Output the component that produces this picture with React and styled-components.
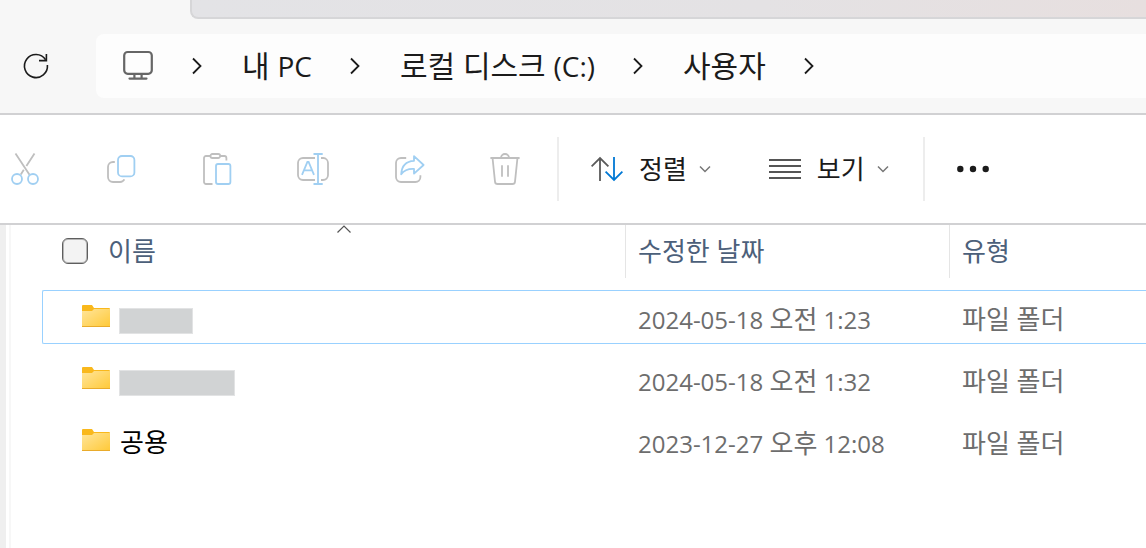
import React from "react";
import styled, { createGlobalStyle } from "styled-components";

const COLORS = {
  chrome: "#f7f7f7",
  line: "#d1d1d3",
  ink: "#1b1b1b",
  header: "#4c607a",
  muted: "#6d6d6d",
  iconGray: "#bfbfbf",
  iconBlue: "#a0cff2",
  focus: "#99d1ff",
};

const GlobalStyle = createGlobalStyle`
  * {
    box-sizing: border-box;
  }

  body {
    margin: 0;
    background: #fff;
    color: ${COLORS.ink};
    font-family: "Open Sans", "Noto Sans CJK KR", sans-serif;
    overflow-x: hidden;
  }

  svg {
    display: block;
    flex-shrink: 0;
    fill: none;
  }
`;

const Window = styled.div`
  display: flex;
  flex-direction: column;
  min-height: 100vh;
`;

const TitleStrip = styled.div`
  height: 19px;
  padding-left: 190px;
  background: ${COLORS.chrome};
`;

const TitleTrack = styled.div`
  height: 100%;
  border: solid #d6d6d8;
  border-width: 0 0 2px 2px;
  border-bottom-left-radius: 8px;
  background: linear-gradient(90deg, #e3e3e6 0%, #e4e2e4 60%, #e7dfdf 100%);
`;

const NavBar = styled.nav`
  display: flex;
  align-items: center;
  padding: 15px 0 15px 20px;
  background: ${COLORS.chrome};
  border-bottom: 2px solid ${COLORS.line};
`;

const IconButton = styled.button`
  display: flex;
  padding: 0;
  border: none;
  background: none;
`;

const AddressBar = styled.div`
  display: flex;
  flex: 1;
  align-items: center;
  gap: 38px;
  height: 64px;
  margin-left: 44px;
  padding-left: 26px;
  border-radius: 8px 0 0 8px;
  background: #fdfdfd;
`;

const Crumb = styled.a`
  padding-left: 2px;
  color: ${COLORS.ink};
  font-size: 30px;
  line-height: 40px;
  text-decoration: none;
  white-space: nowrap;
`;

const Latin = styled.span`
  font-size: 28px;
`;

const ToolBar = styled.div`
  display: flex;
  align-items: center;
  height: 110px;
  padding-left: 9px;
  border-bottom: 2px solid ${COLORS.line};
`;

const FileActions = styled.div`
  display: flex;
  gap: 64px;
  padding-right: 2px;
`;

const Divider = styled.div`
  width: 2px;
  height: 64px;
  margin: 0 32px 0 34px;
  background: #ededed;
`;

const MenuButton = styled.button`
  display: flex;
  align-items: center;
  gap: 12px;
  padding: 0;
  border: none;
  background: none;
  color: ${COLORS.ink};
  font-family: inherit;
  font-size: 26px;
  line-height: 36px;

  & + & {
    margin-left: 58px;
  }
`;

const MenuLabel = styled.span`
  padding-left: 4px;
`;

const Content = styled.main`
  display: flex;
  flex: 1;
`;

const SidebarEdge = styled.div`
  width: 11px;
  border: solid #f7f7f7;
  border-width: 0 2px 0 0;
  background: linear-gradient(90deg, #efefef 6px, #fff 6px);
`;

const FileTable = styled.table`
  display: block;
  flex: 1;
  padding-left: 31px;
`;

const TableHead = styled.thead`
  display: block;
  margin-bottom: 12px;
`;

const TableBody = styled.tbody`
  display: flex;
  flex-direction: column;
  gap: 8px;
`;

const Row = styled.tr`
  display: grid;
  grid-template-columns: 564px 324px 1fr;
  padding-left: 19px;
  border: 1px solid ${(props) => (props.$focused ? COLORS.focus : "transparent")};
  border-right: none;
  border-radius: 2px 0 0 2px;
`;

const HeadRow = styled(Row)`
  border-width: 0 0 0 1px;
`;

const HeadCell = styled.th`
  position: relative;
  display: flex;
  align-items: center;
  gap: 20px;
  height: 53px;
  padding: 0 0 2px ${(props) => (props.$first ? 0 : 12)}px;
  border-right: ${(props) => (props.$last ? "none" : "1px solid #e5e5e5")};
  color: ${COLORS.header};
  font-size: 26px;
  font-weight: 400;
  line-height: 36px;
`;

const SortMark = styled.svg`
  position: absolute;
  top: 0;
  left: 50%;
  margin-left: -8px;
`;

const CheckBox = styled.input`
  appearance: none;
  width: 26px;
  height: 26px;
  margin: 0;
  border: 1px solid #5e5e5e;
  border-radius: 6px;
  background: #f3f3f3;
  box-shadow: inset 0 0 0 1px #b5b5b5;
`;

const Cell = styled.td`
  display: flex;
  align-items: center;
  height: 52px;
  padding: 4px 0 0 12px;
  color: ${COLORS.muted};
  font-size: 26px;
  line-height: 36px;
  white-space: pre;
`;

const NameCell = styled(Cell)`
  gap: 9px;
  padding: 0 0 2px 20px;
  color: #000;
`;

const FileName = styled.span`
  padding: 4px 0 0 1px;
`;

const DateText = styled.span`
  font-size: 24px;
`;

const Meridiem = styled.span`
  font-size: 26px;
`;

const Redacted = styled.span`
  width: ${(props) => props.$width}px;
  height: 26px;
  margin-top: 10px;
  border: 1px solid #e2e3e4;
  background: #d1d3d4;
`;

const RefreshIcon = () => (
  <svg width="32" height="32" stroke={COLORS.ink} strokeWidth="1.6">
    <path d="M27.4 15a11.5 11.5 0 1 1-1.8-5.2" />
    <path d="M26.4 4v6.6H19" />
  </svg>
);

const MonitorIcon = () => (
  <svg width="32" height="32" stroke="#666" strokeWidth="2.2" strokeLinecap="round">
    <rect x="2.2" y="2" width="27.6" height="21.8" rx="3.5" />
    <path d="M12.4 24v4.5M19.6 24v4.5M7.5 28.6h17" />
  </svg>
);

const CrumbArrow = () => (
  <svg width="10" height="18" stroke={COLORS.ink} strokeWidth="1.8">
    <path d="M1 1.5 8.5 9 1 16.5" />
  </svg>
);

const CutIcon = () => (
  <svg width="32" height="32" stroke={COLORS.iconGray} strokeWidth="1.8">
    <path d="m6.5.5 14 21.2M25.5.5 17.4 13M14.8 16.8l-3 4.7" />
    <g stroke={COLORS.iconBlue}>
      <circle cx="8" cy="26" r="5" />
      <circle cx="24" cy="26" r="5" />
    </g>
  </svg>
);

const CopyIcon = () => (
  <svg width="32" height="32" stroke={COLORS.iconGray} strokeWidth="1.8">
    <path d="M9.8 9H8a5 5 0 0 0-5 5v10a5 5 0 0 0 5 5h6.8a5 5 0 0 0 4.6-2.6" />
    <rect x="13" y="3" width="16.4" height="20.4" rx="4" stroke={COLORS.iconBlue} />
  </svg>
);

const PasteIcon = () => (
  <svg width="32" height="32" stroke={COLORS.iconGray} strokeWidth="1.8">
    <path d="M11.5 31H5a2 2 0 0 1-2-2V5a2 2 0 0 1 2-2h4M19 3h4.4a2 2 0 0 1 2 2v2.6" />
    <rect x="9.4" y="1" width="9.8" height="4" rx="2" />
    <rect x="15" y="11" width="14.4" height="20" rx="2" stroke={COLORS.iconBlue} />
  </svg>
);

const RenameIcon = () => (
  <svg width="32" height="32" stroke={COLORS.iconGray} strokeWidth="1.8">
    <path d="M18 5H6a5 5 0 0 0-5 5v12a5 5 0 0 0 5 5h12M24 5h2.2A5 5 0 0 1 31 10v12a5 5 0 0 1-5 5h-2" />
    <g stroke={COLORS.iconBlue}>
      <path d="M16.5 1h9.2M16.5 31h9.2M21 1v30" />
      <path d="M5 21.8 10.4 9h1.2L17 21.8M7 17.4h8" />
    </g>
  </svg>
);

const ShareIcon = () => (
  <svg width="32" height="32" stroke={COLORS.iconGray} strokeWidth="1.8" strokeLinejoin="round">
    <path d="M13.2 5H8a5 5 0 0 0-5 5v14a5 5 0 0 0 5 5h14.4a5 5 0 0 0 5-5v-1.8" />
    <path
      d="M21 3.2 30.6 12 21 20.6V16c-6-.3-10 1.4-12.8 5.2C8.6 13.5 12.8 8.2 21 7.8Z"
      stroke={COLORS.iconBlue}
    />
  </svg>
);

const DeleteIcon = () => (
  <svg width="32" height="32" stroke={COLORS.iconGray} strokeWidth="1.8">
    <path d="M1.4 5h29.2M12 5a4 4 0 0 1 8 0" />
    <path d="M3.6 5.5 6 28.6A2.6 2.6 0 0 0 8.6 31h14.8a2.6 2.6 0 0 0 2.6-2.4L28.4 5.5" />
    <path d="M13 12.3v11.5M19 12.3v11.5" />
  </svg>
);

const SortIcon = () => (
  <svg width="32" height="32" stroke="#5a5a5a" strokeWidth="1.8">
    <path d="M9 28V5M.6 13.4 9 5l8.4 8.4" />
    <path d="M23 4v23M14.6 18.6 23 27l8.4-8.4" stroke="#0078d4" />
  </svg>
);

const ViewIcon = () => (
  <svg width="32" height="32" stroke="#555" strokeWidth="2">
    <path d="M0 7h32M0 13h32M0 19h32M0 25h32" />
  </svg>
);

const DownArrow = () => (
  <svg width="12" height="8" stroke="#777" strokeWidth="1.5">
    <path d="M1 1.5 6 6.5l5-5" />
  </svg>
);

const MoreIcon = () => (
  <svg width="32" height="32">
    <g fill={COLORS.ink}>
      <circle cx="3.3" cy="16" r="3.2" />
      <circle cx="16" cy="16" r="3.2" />
      <circle cx="28.7" cy="16" r="3.2" />
    </g>
  </svg>
);

const FolderIcon = () => (
  <svg width="28" height="22">
    <defs>
      <linearGradient id="folder" x1="0" y1="0" x2="1" y2="1">
        <stop offset="0" stopColor="#ffe59b" />
        <stop offset="1" stopColor="#ffc937" />
      </linearGradient>
    </defs>
    <path d="M0 1q0-1 1-1h9l2 3h15q1 0 1 1v5H0Z" fill="#f9b81c" />
    <path d="M0 6h10l2-2h16v17q0 1-1 1H1q-1 0-1-1Z" fill="url(#folder)" />
    <path d="M0 21.5h28" stroke="#e9ab2b" />
  </svg>
);

const ACTIONS = [
  { label: "잘라내기", icon: <CutIcon /> },
  { label: "복사", icon: <CopyIcon /> },
  { label: "붙여넣기", icon: <PasteIcon /> },
  { label: "이름 바꾸기", icon: <RenameIcon /> },
  { label: "공유", icon: <ShareIcon /> },
  { label: "삭제", icon: <DeleteIcon /> },
];

const FILES = [
  { hidden: 74, date: "2024-05-18", meridiem: "오전", time: "1:23", type: "파일 폴더" },
  { hidden: 116, date: "2024-05-18", meridiem: "오전", time: "1:32", type: "파일 폴더" },
  { name: "공용", date: "2023-12-27", meridiem: "오후", time: "12:08", type: "파일 폴더" },
];

const App = () => {
  return (
    <Window>
      <GlobalStyle />
      <TitleStrip>
        <TitleTrack />
      </TitleStrip>

      <NavBar>
        <IconButton aria-label="새로 고침">
          <RefreshIcon />
        </IconButton>
        <AddressBar>
          <MonitorIcon />
          <CrumbArrow />
          <Crumb href="#">
            내 <Latin>PC</Latin>
          </Crumb>
          <CrumbArrow />
          <Crumb href="#">
            로컬 디스크 <Latin>(C:)</Latin>
          </Crumb>
          <CrumbArrow />
          <Crumb href="#">사용자</Crumb>
          <CrumbArrow />
        </AddressBar>
      </NavBar>

      <ToolBar>
        <FileActions>
          {ACTIONS.map((action) => (
            <IconButton key={action.label} aria-label={action.label} disabled>
              {action.icon}
            </IconButton>
          ))}
        </FileActions>
        <Divider />
        <MenuButton>
          <SortIcon />
          <MenuLabel>정렬</MenuLabel>
          <DownArrow />
        </MenuButton>
        <MenuButton>
          <ViewIcon />
          <MenuLabel>보기</MenuLabel>
          <DownArrow />
        </MenuButton>
        <Divider />
        <IconButton aria-label="자세히 보기">
          <MoreIcon />
        </IconButton>
      </ToolBar>

      <Content>
        <SidebarEdge />
        <FileTable>
          <TableHead>
            <HeadRow>
              <HeadCell $first>
                <CheckBox type="checkbox" aria-label="모두 선택" />
                이름
                <SortMark width="16" height="8" stroke="#555" strokeWidth="1.2">
                  <path d="M1.5 7.5 8 1l6.5 6.5" />
                </SortMark>
              </HeadCell>
              <HeadCell>수정한 날짜</HeadCell>
              <HeadCell $last>유형</HeadCell>
            </HeadRow>
          </TableHead>
          <TableBody>
            {FILES.map((file, index) => (
              <Row key={index} $focused={index === 0}>
                <NameCell>
                  <FolderIcon />
                  {file.name ? <FileName>{file.name}</FileName> : <Redacted $width={file.hidden} />}
                </NameCell>
                <Cell>
                  <DateText>
                    {file.date} <Meridiem>{file.meridiem}</Meridiem> {file.time}
                  </DateText>
                </Cell>
                <Cell>{file.type}</Cell>
              </Row>
            ))}
          </TableBody>
        </FileTable>
      </Content>
    </Window>
  );
};

export default App;
